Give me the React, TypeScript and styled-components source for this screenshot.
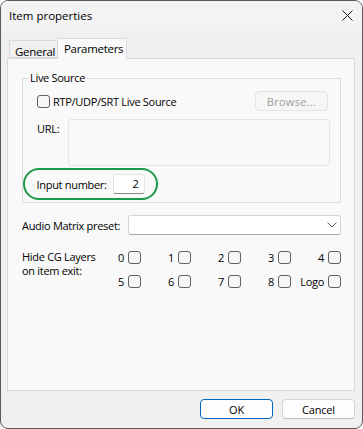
import React from "react";
import styled, { createGlobalStyle } from "styled-components";

const GlobalStyle = createGlobalStyle`
  html, body {
    margin: 0;
    padding: 0;
    background: #ffffff;
  }
  body {
    font-family: "Open Sans", "Noto Sans", "Liberation Sans", sans-serif;
    font-size: 11px;
    letter-spacing: -0.3px;
    color: #000000;
  }
`;

const Window = styled.div`
  width: 363px;
  height: 429px;
  box-sizing: border-box;
  border: 1px solid #5a5a5a;
  border-radius: 8px;
  overflow: hidden;
  background: #f0f0f0;
  display: flex;
  flex-direction: column;
  white-space: nowrap;
`;

const TitleBar = styled.div`
  height: 30px;
  flex: 0 0 auto;
  background: #f3f3f3;
  display: flex;
  align-items: center;
  justify-content: space-between;
  padding: 0 9px 1px 8px;
  box-sizing: border-box;
`;

const Title = styled.span`
  font-size: 11.5px;
  letter-spacing: 0;
  line-height: 16px;
`;

const Content = styled.div`
  flex: 1;
  display: flex;
  flex-direction: column;
  padding: 7px 7px 0 6px;
`;

const TabStrip = styled.div`
  display: flex;
  align-items: flex-end;
  height: 20px;
  padding-left: 2px;
`;

const Tab = styled.div<{ $active?: boolean }>`
  position: relative;
  z-index: 1;
  box-sizing: border-box;
  width: ${p => (p.$active ? "70px" : "48px")};
  height: ${p => (p.$active ? "21px" : "18px")};
  margin-bottom: ${p => (p.$active ? "-1px" : "0")};
  padding: ${p => (p.$active ? "3px 0 0 6px" : "4px 0 0 5px")};
  border: 1px solid #d9d9d9;
  border-bottom: ${p => (p.$active ? "none" : "1px solid #d9d9d9")};
  border-right: ${p => (p.$active ? "1px solid #d9d9d9" : "none")};
  background: ${p => (p.$active ? "#f9f9f9" : "#f0f0f0")};
  font-size: 11.5px;
  line-height: 14px;
`;

const Panel = styled.div`
  height: 333px;
  box-sizing: border-box;
  border: 1px solid #d9d9d9;
  background: #f9f9f9;
  padding: 11px 13px 0 14px;
  display: flex;
  flex-direction: column;
`;

const GroupBox = styled.fieldset`
  margin: 0;
  padding: 5px 10px 2px 14px;
  border: 1px solid #dcdcdc;
  min-width: 0;
`;

const Legend = styled.legend`
  padding: 0 2px;
  margin-left: -9px;
  line-height: 16px;
`;

const SourceRow = styled.div`
  display: flex;
  align-items: center;
  justify-content: space-between;
  height: 20px;
`;

const CheckLabel = styled.label`
  display: inline-flex;
  align-items: center;
  gap: 3px;
`;

const Box = styled.span`
  width: 13px;
  height: 13px;
  box-sizing: border-box;
  border: 1px solid #616161;
  border-radius: 3px;
  background: #f6f6f6;
  flex: 0 0 auto;
`;

const Button = styled.button<{ $primary?: boolean }>`
  width: 73px;
  height: 20px;
  box-sizing: border-box;
  font-family: inherit;
  font-size: 11px;
  letter-spacing: -0.2px;
  color: #000;
  background: #fdfdfd;
  border: 1px solid ${p => (p.$primary ? "#0067c0" : "#d5d5d5")};
  border-bottom-color: ${p => (p.$primary ? "#0067c0" : "#bcbcbc")};
  border-radius: 4px;
  padding: 0;
  &:disabled {
    color: #9e9e9e;
    background: #f6f6f6;
    border-color: #e3e3e3;
  }
`;

const BrowseButton = styled(Button)`
  margin-right: 2px;
  letter-spacing: 0.3px;
`;

const UrlRow = styled.div`
  display: flex;
  margin-top: 8px;
`;

const UrlLabel = styled.span`
  width: 31px;
  padding-top: 2px;
`;

const UrlBox = styled.div`
  flex: 1;
  height: 47px;
  box-sizing: border-box;
  border: 1px solid #e5e5e5;
  border-radius: 3px;
  background: #f9f9f9;
`;

const Highlight = styled.div`
  display: inline-flex;
  align-items: center;
  box-sizing: border-box;
  height: 32px;
  margin: 2px 0 0 -14px;
  padding: 0 11.5px;
  border: 2.5px solid #1c9a49;
  border-radius: 16px;
`;

const InputLabel = styled.span`
  width: 76px;
`;

const NumberBox = styled.div`
  width: 32px;
  height: 20px;
  box-sizing: border-box;
  background: #ffffff;
  border: 1px solid #e3e3e3;
  border-bottom-color: #8a8a8a;
  border-radius: 3px;
  text-align: right;
  padding-right: 5px;
  line-height: 18px;
`;

const FieldRow = styled.div`
  display: flex;
  align-items: center;
  margin-top: 12px;
`;

const FieldLabel = styled.span<{ $width: number }>`
  width: ${p => p.$width}px;
  flex: 0 0 auto;
`;

const Combo = styled.div`
  flex: 1;
  height: 20px;
  box-sizing: border-box;
  background: #ffffff;
  border: 1px solid #d5d5d5;
  border-bottom-color: #a8a8a8;
  border-radius: 3px;
  display: flex;
  align-items: center;
  justify-content: flex-end;
  padding-right: 3px;
`;

const LayersRow = styled.div`
  display: flex;
  align-items: flex-start;
  margin-top: 16px;
`;

const LayersLabel = styled.span`
  width: 69px;
  line-height: 14px;
  margin-top: -1px;
  flex: 0 0 auto;
`;

const LayerGrid = styled.div`
  flex: 1;
  display: grid;
  grid-template-columns: repeat(5, 1fr);
  row-gap: 11px;
  justify-items: end;
`;

const LayerItem = styled.label`
  display: inline-flex;
  align-items: center;
  gap: 4px;
  height: 13px;
`;

const Footer = styled.div`
  display: flex;
  justify-content: flex-end;
  gap: 9px;
  margin-top: 8px;
`;

const layers = ["0", "1", "2", "3", "4", "5", "6", "7", "8", "Logo"];

export default function App() {
  return (
    <>
      <GlobalStyle />
      <Window>
        <TitleBar>
          <Title>Item properties</Title>
          <svg width="11" height="11" viewBox="0 0 11 11">
            <path d="M0.5 0.5 L10.5 10.5 M10.5 0.5 L0.5 10.5" stroke="#1a1a1a" strokeWidth="1" fill="none" />
          </svg>
        </TitleBar>
        <Content>
          <TabStrip>
            <Tab>General</Tab>
            <Tab $active>Parameters</Tab>
          </TabStrip>
          <Panel>
            <GroupBox>
              <Legend>Live Source</Legend>
              <SourceRow>
                <CheckLabel>
                  <Box />
                  RTP/UDP/SRT Live Source
                </CheckLabel>
                <BrowseButton disabled>Browse...</BrowseButton>
              </SourceRow>
              <UrlRow>
                <UrlLabel>URL:</UrlLabel>
                <UrlBox />
              </UrlRow>
              <Highlight>
                <InputLabel>Input number:</InputLabel>
                <NumberBox>2</NumberBox>
              </Highlight>
            </GroupBox>
            <FieldRow>
              <FieldLabel $width={106}>Audio Matrix preset:</FieldLabel>
              <Combo>
                <svg width="10" height="6" viewBox="0 0 10 6">
                  <path d="M0.5 0.5 L5 5 L9.5 0.5" stroke="#5a5a5a" strokeWidth="1" fill="none" />
                </svg>
              </Combo>
            </FieldRow>
            <LayersRow>
              <LayersLabel>
                Hide CG Layers
                <br />
                on item exit:
              </LayersLabel>
              <LayerGrid>
                {layers.map(l => (
                  <LayerItem key={l}>
                    {l}
                    <Box />
                  </LayerItem>
                ))}
              </LayerGrid>
            </LayersRow>
          </Panel>
          <Footer>
            <Button $primary>OK</Button>
            <Button>Cancel</Button>
          </Footer>
        </Content>
      </Window>
    </>
  );
}
